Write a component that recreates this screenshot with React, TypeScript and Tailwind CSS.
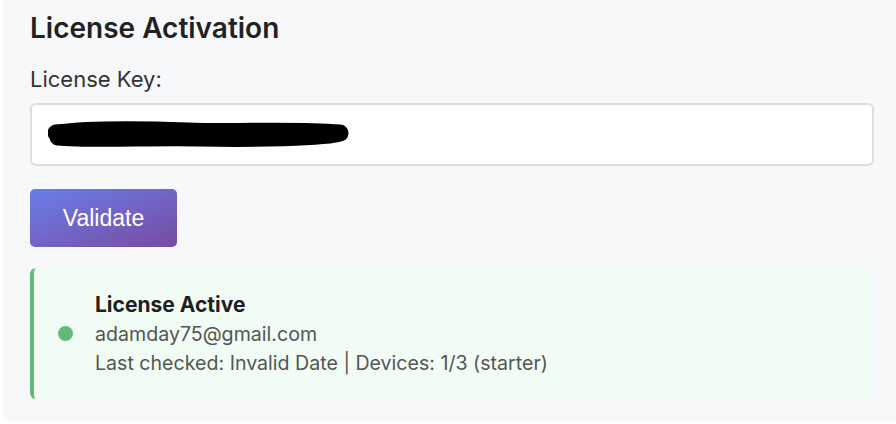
export default function App() {
  return (
    <div className="h-[424px] w-[896px] overflow-hidden bg-white" style={{ fontFamily: 'Inter, "Noto Sans", sans-serif' }}>
      <div className="ml-[2px] h-[421px] rounded-bl-[8px] bg-[#f7f8fa] pl-[28px] pr-[20px]">
        {/* Title */}
        <h2 className="pt-[11px] text-[28px] leading-[34px] font-semibold text-[#222]">License Activation</h2>

        {/* Key field */}
        <label className="mt-[21px] block text-[22px] leading-[26px] text-[#333]">License Key:</label>
        <div className="mt-[11px] flex h-[63px] w-[844px] items-center rounded-[6px] border-2 border-[#dddddd] bg-white pl-[16px]">
          <svg width="304" height="26" viewBox="0 0 304 26" className="mt-[-1px]">
            <path
              d="M8 12 C 40 8, 90 8, 140 10 S 240 8, 292 12 C 280 17, 200 18, 150 17 S 40 19, 10 16"
              fill="none"
              stroke="#000"
              strokeWidth="17"
              strokeLinecap="round"
              strokeLinejoin="round"
            />
          </svg>
        </div>

        {/* Button */}
        <button
          className="mt-[23px] flex h-[58px] w-[147px] items-center justify-center rounded-[5px] bg-gradient-to-br from-[#667eea] to-[#764ba2] text-[23px] text-white"
          style={{ fontFamily: '"Liberation Sans", Arial, sans-serif' }}
        >
          Validate
        </button>

        {/* Status */}
        <div className="mt-[21px] flex h-[131px] w-[844px] items-center gap-[22px] rounded-[6px] border-l-4 border-[#65b97a] bg-[#f1fcf4] pl-[24px]">
          <span className="h-[15px] w-[15px] shrink-0 rounded-full bg-[#65b97a]"></span>
          <div className="-mt-[1px] flex flex-col">
            <span className="text-[21px] leading-[30px] font-bold text-[#1f1f1f]">License Active</span>
            <span className="text-[19.6px] leading-[29px] text-[#555]">adamday75@gmail.com</span>
            <span className="text-[19.6px] leading-[28px] text-[#555]">Last checked: Invalid Date | Devices: 1/3 (starter)</span>
          </div>
        </div>
      </div>
    </div>
  );
}
